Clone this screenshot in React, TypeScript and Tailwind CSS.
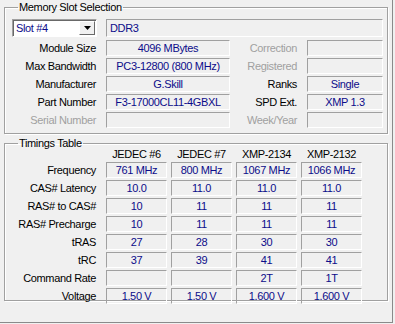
import React from "react";

const font = { fontFamily: '"Liberation Sans", Arial, sans-serif' };

function Box({ children, className = "" }: { children?: React.ReactNode; className?: string }) {
  return (
    <div
      className={
        "h-[16px] border-t border-l border-b border-r border-t-[#a0a0a0] border-l-[#a0a0a0] border-b-white border-r-white flex items-center justify-center text-[#0c0c8a] leading-none whitespace-nowrap " +
        className
      }
    >
      {children}
    </div>
  );
}

function Label({ children, disabled }: { children: React.ReactNode; disabled?: boolean }) {
  return (
    <div className={"h-[16px] flex items-center justify-end leading-none whitespace-nowrap " + (disabled ? "text-[#a0a0a0]" : "text-black")}>
      {children}
    </div>
  );
}

const slotRows: [string, string, boolean, string, string, boolean][] = [
  ["Module Size", "4096 MBytes", false, "Correction", "", true],
  ["Max Bandwidth", "PC3-12800 (800 MHz)", false, "Registered", "", true],
  ["Manufacturer", "G.Skill", false, "Ranks", "Single", false],
  ["Part Number", "F3-17000CL11-4GBXL", false, "SPD Ext.", "XMP 1.3", false],
  ["Serial Number", "", true, "Week/Year", "", true],
];

const timingRows: [string, string[]][] = [
  ["Frequency", ["761 MHz", "800 MHz", "1067 MHz", "1066 MHz"]],
  ["CAS# Latency", ["10.0", "11.0", "11.0", "11.0"]],
  ["RAS# to CAS#", ["10", "11", "11", "11"]],
  ["RAS# Precharge", ["10", "11", "11", "11"]],
  ["tRAS", ["27", "28", "30", "30"]],
  ["tRC", ["37", "39", "41", "41"]],
  ["Command Rate", ["", "", "2T", "1T"]],
  ["Voltage", ["1.50 V", "1.50 V", "1.600 V", "1.600 V"]],
];

export default function App() {
  return (
    <div className="w-[395px] h-[324px] bg-[#f0f0f0] text-[11px] tracking-[-0.35px] overflow-hidden" style={font}>
      <div className="w-[393px] h-[323px] border-r border-b border-[#8a8a8a] pl-[4px] pr-[4px]">
        <fieldset className="w-[384px] h-[134px] border border-[#a0a0a0] shadow-[inset_1px_1px_0_white,1px_1px_0_white] pl-[7px] pt-[5px]">
          <legend className="ml-[6px] px-[1px] leading-[14px] text-black">Memory Slot Selection</legend>
          <div className="flex gap-[9px] h-[18px]">
            <div className="w-[85px] h-[18px] bg-white border border-t-[#a0a0a0] border-l-[#a0a0a0] border-b-white border-r-white shadow-[inset_1px_1px_0_#696969] flex items-center justify-between pl-[3px] pr-[1px]">
              <span className="text-[#0c0c8a] leading-none">Slot #4</span>
              <div className="w-[16px] h-[14px] bg-[#f0f0f0] border border-t-white border-l-white border-b-[#696969] border-r-[#696969] flex items-center justify-center">
                <svg width="7" height="4" viewBox="0 0 7 4">
                  <path d="M0 0h7L3.5 4z" fill="black" />
                </svg>
              </div>
            </div>
            <Box className="w-[277px] !h-[18px] !justify-start pl-[3px]">DDR3</Box>
          </div>
          <div className="grid grid-cols-[84px_124px_57px_76px] gap-x-[10px] gap-y-[2px] mt-[3px]">
            {slotRows.map(([l, v, ld, r, rv, rd]) => (
              <React.Fragment key={l}>
                <Label disabled={ld}>{l}</Label>
                <Box>{v}</Box>
                <Label disabled={rd}>{r}</Label>
                <Box>{rv}</Box>
              </React.Fragment>
            ))}
          </div>
        </fieldset>
        <fieldset className="w-[384px] h-[165px] mt-[2px] border border-[#a0a0a0] shadow-[inset_1px_1px_0_white,1px_1px_0_white] pl-[7px]">
          <legend className="ml-[6px] px-[1px] leading-[14px] text-black">Timings Table</legend>
          <div className="grid grid-cols-[90px_61px_61px_61px_61px] gap-x-[4px] gap-y-[2px] -mt-[1px]">
            <div className="h-[11px]" />
            {["JEDEC #6", "JEDEC #7", "XMP-2134", "XMP-2132"].map((h) => (
              <div key={h} className="h-[11px] flex items-center justify-center text-black whitespace-nowrap leading-none">
                {h}
              </div>
            ))}
            {timingRows.map(([l, vals]) => (
              <React.Fragment key={l}>
                <div className="mr-[6px]">
                  <Label>{l}</Label>
                </div>
                {vals.map((v, i) => (
                  <Box key={i}>{v}</Box>
                ))}
              </React.Fragment>
            ))}
          </div>
        </fieldset>
      </div>
    </div>
  );
}
